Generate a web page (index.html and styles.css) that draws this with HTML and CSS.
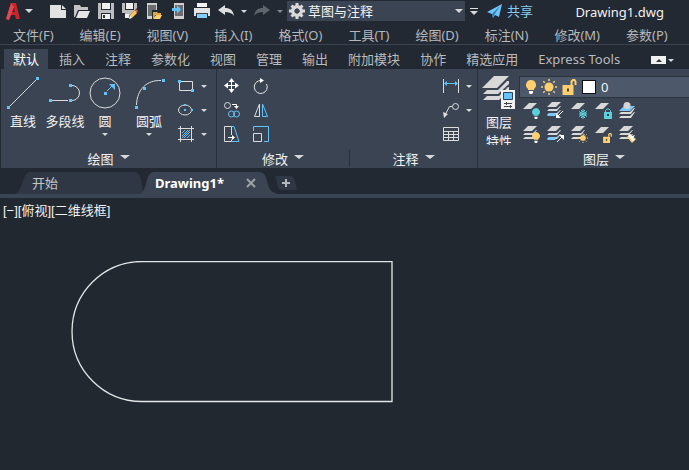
FILE: index.html
```html
<!DOCTYPE html>
<html lang="zh-CN">
<head>
  <meta charset="UTF-8" />
  <title>Drawing1.dwg</title>
  <link rel="stylesheet" href="styles.css">
</head>
<body>
  <!-- shared icon parts -->
  <svg class="defs" aria-hidden="true">
    <symbol id="sheet" viewBox="0 0 18 18"><path d="M0 7L6 1h8L8 7z" fill="#d8d8d8"/></symbol>
    <symbol id="stack" viewBox="0 0 18 18">
      <path d="M0 5L5 0h9L9 5z" fill="#d8d8d8"/>
      <path d="M0 9L2 7h8L13 4h1L10 9zM0 13l2-2h8l3-3h1l-4 5z" fill="#d8d8d8"/>
    </symbol>
    <symbol id="bulb" viewBox="0 0 10 14"><path d="M5 0a5 5 0 0 1 3 9v1H2V9a5 5 0 0 1 3-9z" fill="currentColor"/><path d="M3 11h4v2l-1 1H4l-1-1z" fill="#fff"/></symbol>
    <symbol id="sun" viewBox="0 0 16 16"><circle cx="8" cy="8" r="4.5" fill="#ffcf70"/><path d="M8 0v2M8 14v2M0 8h2M14 8h2M2.300 2.300l1.400 1.400M12.300 12.300l1.400 1.400M2.300 13.700l1.400-1.400M12.300 3.700l1.400-1.400" stroke="#ffcf70" stroke-width="1.500"/></symbol>
    <symbol id="unlock" viewBox="0 0 14 16"><path d="M0 6h11v10H0z" fill="#ffcf70"/><path d="M9 6V2.500L10.500 1h1.500L13 2.500V6" fill="none" stroke="#ffcf70" stroke-width="2"/><path d="M4.500 9.500h2v3h-2z" fill="#4a4438"/></symbol>
  </svg>

  <header class="titlebar">
    <button class="app" aria-label="应用程序"><svg width="14" height="17" viewBox="0 0 14 17"><path d="M5 0h5l4 16h-4l-1-4H5l-2 5-3-1zM8 4L6 9h2.500z" fill="#c9232d"/><path d="M5 0L0 16l3 1 5-13z" fill="#e04a4f"/></svg><i class="caret big"></i></button>
    <nav class="quick" aria-label="快速访问">
      <button aria-label="新建"><svg width="16" height="16" viewBox="0 0 16 16"><path d="M0 2h11v5h5v8H0z" fill="#e2e2e2"/><path d="M12 2l4 4h-4z" fill="#e2e2e2"/></svg></button>
      <button aria-label="打开"><svg width="16" height="16" viewBox="0 0 16 16"><path d="M0 2h6l1 2h7v3H4l-3 7H0z" fill="#c4c4c4"/><path d="M5 8h11l-3 7H2z" fill="#e6e6e6"/></svg></button>
      <button aria-label="保存"><svg width="16" height="16" viewBox="0 0 16 16"><path d="M0 0h3v7h10V0h3v16h-3v-6H3v6H0z" fill="#bdbdbd"/><path d="M4 0h8v6H4zM4 11h8v5H4z" fill="#f0f0f0"/><path d="M5 12h2v3H5z" fill="#333"/></svg></button>
      <button aria-label="另存为"><svg width="16" height="16" viewBox="0 0 16 16"><path d="M0 0h3v7h9V0h3v5L7 13v1H3v-4H0z" fill="#bdbdbd"/><path d="M4 0h7v6H4zM3 11h4v4H3z" fill="#f0f0f0"/><path d="M8 12l5-5 2 3-5 5z" fill="#ffc65c"/><path d="M13 7l1-1 2 2-1 2z" fill="#e6603c"/><path d="M8 12l2 3-3 1z" fill="#fff"/></svg></button>
      <button aria-label="从设备打开"><svg width="16" height="16" viewBox="0 0 16 16"><path d="M1 0h10v7H6v9H1z" fill="#d0d0d0"/><path d="M2 2h8v5H6v6H2z" fill="#6b6d70"/><path d="M7 9h4l1 1h3v2H9l-1 3H7z" fill="#e3a63c"/><path d="M10 12h6l-2 4H7z" fill="#ffd073"/></svg></button>
      <button aria-label="保存到设备"><svg width="16" height="16" viewBox="0 0 16 16"><path d="M4 0h10v16H4z" fill="#d0d0d0"/><path d="M5 2h8v11H5z" fill="#6b6d70"/><path d="M2 5h5V2l4 4.500L7 11V8H2z" fill="#62c3f8"/></svg></button>
      <button aria-label="打印"><svg width="16" height="16" viewBox="0 0 16 16"><path d="M3 0h10v4H3z" fill="#f4f4f4"/><path d="M0 5h16v8h-2v-3H2v3H0z" fill="#e4e4e4"/><path d="M3 11h10v4H3z" fill="#84ccfa"/><path d="M2 10h12v1H2z" fill="#444"/></svg></button>
      <button aria-label="放弃"><svg width="16" height="16" viewBox="0 0 16 16"><path d="M0 7l7-5v3c5 0 8 2 9 8-2-3-5-4-9-4v3z" fill="#dedede"/></svg></button>
      <button class="slim" aria-label="放弃列表"><i class="caret"></i></button>
      <button aria-label="重做"><svg width="16" height="16" viewBox="0 0 16 16"><path d="M16 7L9 2v3C4 5 1 7 0 13c2-3 5-4 9-4v3z" fill="#5f656c"/></svg></button>
      <button class="slim" aria-label="重做列表"><i class="caret dim"></i></button>
    </nav>
    <label class="workspace">
      <svg width="16" height="16" viewBox="0 0 16 16"><path d="M6.500 0h3v3h-3zM6.500 13h3v3h-3zM0 6.500h3v3H0zM13 6.500h3v3h-3z" fill="#dadada"/><path d="M2.500 2.500l11 11M13.500 2.500l-11 11" stroke="#dadada" stroke-width="3"/><circle cx="8" cy="8" r="4.500" fill="none" stroke="#dadada" stroke-width="3"/><circle cx="8" cy="8" r="2.500" fill="#3b4453"/></svg>
      <select aria-label="工作空间"><option>草图与注释</option></select>
      <i class="caret big"></i>
    </label>
    <button class="more" aria-label="自定义"><i class="bar"></i><i class="caret big"></i></button>
    <a class="share" href="#"><svg width="15" height="14" viewBox="0 0 15 14"><path d="M0 8L15 0l-3 13-4-2-2 3-1-4z" fill="#6cc4fa"/><path d="M5 10l8-8-6 9-1 3z" fill="#2b78ac"/></svg>共享</a>
    <span class="filename">Drawing1.dwg</span>
  </header>

  <nav class="menubar">
    <button>文件(F)</button><button>编辑(E)</button><button>视图(V)</button><button>插入(I)</button><button>格式(O)</button><button>工具(T)</button><button>绘图(D)</button><button>标注(N)</button><button>修改(M)</button><button>参数(P)</button>
  </nav>

  <nav class="ribbon-tabs">
    <button class="active">默认</button><button>插入</button><button>注释</button><button>参数化</button><button>视图</button><button>管理</button><button>输出</button><button>附加模块</button><button>协作</button><button>精选应用</button><button>Express Tools</button>
    <button class="minimize" aria-label="最小化"><i class="caret up"></i></button>
    <button class="min-menu" aria-label="最小化选项"><i class="caret"></i></button>
  </nav>

  <main class="ribbon">
    <section class="panel draw">
      <div class="tools">
        <button class="large"><svg width="32" height="32" viewBox="0 0 32 32"><path d="M3 29L29 3" stroke="#dcdcdc"/><path d="M0 29h3v3H0zM29 0h3v3h-3z" fill="#62c3f8"/></svg>直线</button>
        <button class="large"><svg width="32" height="32" viewBox="0 0 32 32"><path d="M3 23.500h16M23 8.500a7.500 7.500 0 0 1 0 15" fill="none" stroke="#dcdcdc"/><path d="M0 22h3v3H0zM20 22h3v3h-3zM20 7h3v3h-3z" fill="#62c3f8"/></svg>多段线</button>
        <button class="large"><svg width="32" height="32" viewBox="0 0 32 32"><circle cx="16" cy="16" r="15" fill="none" stroke="#dcdcdc"/><path d="M18 14l6-6" stroke="#62c3f8"/><path d="M20 7h6v6zM15 15h3v3h-3z" fill="#62c3f8"/></svg>圆<i class="caret"></i></button>
        <button class="large"><svg width="32" height="32" viewBox="0 0 32 32"><path d="M3.500 28C4 12 14 3 28 3.500" fill="none" stroke="#dcdcdc"/><path d="M2 29h3v3H2zM10 10h3v3h-3zM29 2h3v3h-3z" fill="#62c3f8"/></svg>圆弧<i class="caret"></i></button>
        <div class="small-tools">
          <button aria-label="矩形"><svg width="16" height="16" viewBox="0 0 16 16"><path d="M1.500 3.500h13v9h-13z" fill="none" stroke="#dcdcdc"/><path d="M0 2h3v3H0zM13 11h3v3h-3z" fill="#62c3f8"/></svg><i class="caret"></i></button>
          <button aria-label="椭圆"><svg width="16" height="16" viewBox="0 0 16 16"><ellipse cx="7" cy="8" rx="6.500" ry="5" fill="none" stroke="#dcdcdc"/><path d="M6 2h2v2H6zM6 7h2v2H6zM13 7h2v2h-2z" fill="#62c3f8"/></svg><i class="caret"></i></button>
          <button aria-label="图案填充"><svg width="16" height="16" viewBox="0 0 16 16"><path d="M0 2.500h16M0 13.500h16M2.500 0v16M13.500 0v16" stroke="#dcdcdc"/><path d="M4 7l3-3M4 10l6-6M4 12l8-8M6 12l6-6M9 12l3-3" stroke="#62c3f8"/></svg><i class="caret"></i></button>
        </div>
      </div>
      <button class="panel-title">绘图<i class="caret title"></i></button>
    </section>

    <section class="panel modify">
      <div class="tools">
        <div class="pair-tools">
          <button aria-label="移动"><svg width="16" height="16" viewBox="0 0 16 16"><path d="M7.500 2v11M2 7.500h11" stroke="#fff"/><path d="M7.500 0l3 4h-6zM7.500 15l3-4h-6zM0 7.500l4-3v6zM15 7.500l-4-3v6z" fill="#fff"/></svg></button>
          <button aria-label="旋转"><svg width="16" height="16" viewBox="0 0 16 16"><path d="M8 2.500A6.500 6.500 0 1 0 13.500 6" fill="none" stroke="#e6e6e6"/><path d="M7 0l4 2.500L7 5z" fill="#fff"/></svg></button>
          <button aria-label="复制"><svg width="16" height="16" viewBox="0 0 16 16"><g fill="none"><circle cx="3.500" cy="3.500" r="3" stroke="#dcdcdc"/><circle cx="7.500" cy="12" r="3" stroke="#62c3f8"/><circle cx="12.500" cy="12" r="3" stroke="#62c3f8"/><path d="M8 2.500h4.500V5" stroke="#fff"/></g><path d="M10 4h5l-2.500 3z" fill="#fff"/></svg></button>
          <button aria-label="镜像"><svg width="16" height="16" viewBox="0 0 16 16"><path d="M6.500 2v12.500h-5z" fill="none" stroke="#dcdcdc"/><path d="M9.500 2v12.500h5z" fill="none" stroke="#62c3f8"/></svg></button>
          <button aria-label="拉伸"><svg width="16" height="16" viewBox="0 0 16 16"><path d="M7.500 9V.5h-7v15h7v-2" fill="none" stroke="#dcdcdc"/><path d="M8 .5h2l5 15H8" fill="none" stroke="#62c3f8"/><path d="M4 11.500h5" stroke="#fff"/><path d="M8 9l3 2.500L8 14z" fill="#fff"/></svg></button>
          <button aria-label="缩放"><svg width="16" height="16" viewBox="0 0 16 16"><path d="M.5 5V.5h15v15H11" fill="none" stroke="#62c3f8"/><path d="M.5 7.500h8v8h-8z" fill="none" stroke="#dcdcdc"/></svg></button>
        </div>
      </div>
      <button class="panel-title">修改<i class="caret title"></i></button>
    </section>

    <section class="panel annotate">
      <div class="tools">
        <div class="small-tools">
          <button aria-label="标注"><svg width="16" height="16" viewBox="0 0 16 16"><path d="M.5 1v14M15.500 1v14" stroke="#dcdcdc"/><path d="M2 5.500h12" stroke="#62c3f8"/><path d="M1 5.500L4 3v5zM15 5.500L12 3v5z" fill="#62c3f8"/></svg><i class="caret"></i></button>
          <button aria-label="引线"><svg width="16" height="16" viewBox="0 0 16 16"><circle cx="12.500" cy="4.500" r="3" fill="none" stroke="#dcdcdc"/><path d="M9 4.500H6.500L2 13" fill="none" stroke="#dcdcdc"/><path d="M0 10l5 2-4 4z" fill="#dcdcdc"/></svg><i class="caret"></i></button>
          <button aria-label="表格"><svg width="16" height="16" viewBox="0 0 16 16"><path d="M.5 1.500h15v13H.5zM0 5.500h16M0 8.500h16M0 11.500h16M5.500 5v9M10.500 5v9" fill="none" stroke="#dcdcdc"/></svg></button>
        </div>
      </div>
      <button class="panel-title">注释<i class="caret title"></i></button>
    </section>

    <section class="panel layers">
      <div class="tools">
        <button class="large props"><svg width="34" height="34" viewBox="0 0 34 34"><path d="M0 12L12 0h15L15 12zM1 18l4-4h11l9-9h2v3L16 18zM1 24l4-4h12l9-9h1v3L17 24z" fill="#d8d8d8"/><path d="M19 14h14v19H19z" fill="#f0f0f0"/><path d="M21.500 16.500h9v7h-9z" fill="#62c3f8" stroke="#25425c"/><path d="M22 27.500h8M22 30.500h8M24.500 26v3M28.500 29v3" stroke="#444"/></svg><span>图层</span><span>特性</span></button>
        <div class="layer-box">
          <div class="layer-combo">
            <button class="yellow" aria-label="开关图层"><svg width="10" height="14"><use href="#bulb"/></svg></button>
            <button aria-label="冻结图层"><svg width="16" height="16"><use href="#sun"/></svg></button>
            <button aria-label="锁定图层"><svg width="15" height="16"><use href="#unlock"/></svg></button>
            <i class="swatch"></i>
            <select aria-label="图层"><option>0</option></select>
          </div>
          <div class="layer-tools">
            <button class="teal" aria-label="关闭"><svg width="18" height="18" viewBox="0 0 18 18"><use href="#sheet"/><use href="#bulb" x="9" y="6" width="8" height="11"/></svg></button>
            <button aria-label="隔离"><svg width="18" height="18" viewBox="0 0 18 18"><use href="#stack"/><path d="M0 14l2-3h8l-2 3z" fill="#7cc8fa"/><path d="M16 9l-5 5" stroke="#fff"/><path d="M9 11v5h5z" fill="#fff"/></svg></button>
            <button aria-label="冻结"><svg width="18" height="18" viewBox="0 0 18 18"><use href="#sheet"/><circle cx="12" cy="12" r="2.500" fill="none" stroke="#5bd0dc"/><path d="M12 7v10M8 9.500l8 5M8 14.500l8-5M10 8l2 2 2-2M10 16l2-2 2 2M8 12h8" stroke="#5bd0dc" fill="none"/></svg></button>
            <button aria-label="锁定"><svg width="18" height="18" viewBox="0 0 18 18"><use href="#sheet"/><path d="M9 10h8v7H9z" fill="#5bd0dc"/><path d="M10.500 10V8.500L12 7h2l1.500 1.500V10" fill="none" stroke="#5bd0dc"/><path d="M12 12h2v2h-2z" fill="#254552"/></svg></button>
            <button aria-label="置为当前"><svg width="18" height="18" viewBox="0 0 18 18"><path d="M0 12l2-2h9l4-4h1l-4 6zM0 16l2-2h9l4-4h1l-4 6z" fill="#dcdcdc"/><path d="M0 9l5-5h11l-5 5z" fill="#7cc8fa"/><circle cx="8" cy="3.500" r="3.500" fill="#d4d4d4"/></svg></button>
            <button class="yellow" aria-label="打开所有图层"><svg width="18" height="18" viewBox="0 0 18 18"><use href="#stack"/><use href="#bulb" x="9" y="6" width="8" height="11"/></svg></button>
            <button aria-label="取消隔离"><svg width="18" height="18" viewBox="0 0 18 18"><use href="#stack"/><path d="M0 14l2-3h8l-2 3z" fill="#7cc8fa"/><path d="M10 16l5-5" stroke="#fff"/><path d="M12 9h5v5z" fill="#fff"/></svg></button>
            <button aria-label="解冻"><svg width="18" height="18" viewBox="0 0 18 18"><use href="#stack"/><use href="#sun" x="7" y="7" width="10" height="10"/></svg></button>
            <button aria-label="解锁"><svg width="18" height="18" viewBox="0 0 18 18"><use href="#sheet"/><use href="#unlock" x="8" y="7" width="9" height="10"/></svg></button>
            <button aria-label="匹配图层"><svg width="18" height="18" viewBox="0 0 18 18"><use href="#stack"/><path d="M8 11l3-3 6 5-4 4z" fill="#ffcf70"/><path d="M11 8l2 2 3-1-2 3 2 2-2 1-5-5z" fill="#fff"/></svg></button>
          </div>
        </div>
      </div>
      <button class="panel-title">图层<i class="caret title"></i></button>
    </section>
  </main>

  <nav class="file-tabs">
    <div class="file-tab start">
      <svg class="tab-shape" viewBox="0 0 132 24" preserveAspectRatio="none"><path d="M0 24C10 22 7 0 17 0H122C132 0 129 22 132 24z" fill="#303744"/></svg>
      <button>开始</button>
    </div>
    <div class="file-tab current">
      <svg class="tab-shape" viewBox="0 0 138 24" preserveAspectRatio="none"><path d="M0 24C8 20 5 0 14 0H118C132 0 122 21 138 24z" fill="#3b4453"/></svg>
      <button>Drawing1*</button>
      <button class="close" aria-label="关闭"><svg width="10" height="10" viewBox="0 0 10 10"><path d="M1 1l8 8M9 1L1 9" stroke="#9da2a9" stroke-width="2"/></svg></button>
    </div>
    <button class="add-tab" aria-label="新图形"><svg width="22" height="14" viewBox="0 0 22 14"><path d="M0 0h15c5 0 5 7 7 14H7C1 14 3 5 0 0z" fill="#303744"/><path d="M11 3v8M7 7h8" stroke="#b4b8bd" stroke-width="2"/></svg></button>
  </nav>

  <section class="canvas">
    <div class="view-controls"><button>[−]</button><button>[俯视]</button><button>[二维线框]</button></div>
    <svg class="drawing" width="322" height="142" viewBox="0 0 322 142"><path d="M71 .5H321V140.500H71A70 70 0 0 1 71 .5z" fill="none" stroke="#e4e5e6" stroke-width="1.300"/></svg>
  </section>
</body>
</html>
```

FILE: styles.css
```css
* {
  box-sizing: border-box;
}
body {
  margin: 0;
  min-height: 100vh;
  display: flex;
  flex-direction: column;
  background: #222933;
  color: #f2f2f2;
  font-family: "Noto Sans", "Noto Sans CJK SC", sans-serif;
  font-size: 13px;
  line-height: 16px;
  overflow-x: hidden;
}
button, select {
  margin: 0;
  padding: 0;
  border: none;
  background: none;
  color: inherit;
  font: inherit;
  white-space: nowrap;
}
select {
  appearance: none;
  outline: none;
}
svg {
  display: block;
  flex: none;
}
.defs {
  position: absolute;
  width: 0;
  height: 0;
}
.yellow {
  color: #ffcf70;
}
.teal {
  color: #5bd0dc;
}

/* triangles */
.caret {
  flex: none;
  width: 0;
  border: 3px solid transparent;
  border-top-color: #d6d8da;
  border-bottom: none;
}
.caret.big {
  border-width: 4px 4px 0;
}
.caret.title {
  border-width: 4px 5px 0;
  margin-bottom: 3px;
}
.caret.dim {
  border-top-color: #858a90;
}
.caret.up {
  border-top: none;
  border-bottom: 3px solid #333;
}

/* title bar */
.titlebar {
  height: 22px;
  display: flex;
  align-items: center;
  padding: 0 25px 0 6px;
}
.app {
  display: flex;
  align-items: center;
  gap: 5px;
  margin-right: 17px;
}
.quick {
  display: flex;
  align-items: center;
  gap: 8px;
  margin-right: 5px;
}
.quick .slim {
  width: 4px;
  display: flex;
  justify-content: center;
}
.workspace {
  width: 178px;
  height: 20px;
  display: flex;
  align-items: center;
  gap: 3px;
  padding: 0 2px;
  background: #3b4453;
}
.workspace select {
  flex: 1;
}
.more {
  display: flex;
  flex-direction: column;
  align-items: center;
  gap: 2px;
  margin: 0 9px 0 5px;
}
.more .bar {
  width: 8px;
  height: 1px;
  background: #e0e0e0;
}
.share {
  display: flex;
  align-items: center;
  gap: 5px;
  color: #84ccf6;
  text-decoration: none;
}
.filename {
  margin-left: auto;
  padding-top: 2px;
}

/* menus and ribbon tabs */
.menubar {
  height: 23px;
  display: flex;
  align-items: center;
  gap: 26px;
  padding: 3px 0 0 13px;
  border-bottom: 1px solid #3b4350;
  color: #b5b8bc;
}
.ribbon-tabs {
  height: 24px;
  display: flex;
  gap: 2px;
  padding: 4px 0 0 4px;
  color: #b8bbbf;
}
.ribbon-tabs button {
  padding: 0 9px;
}
.ribbon-tabs .active {
  background: #3b4453;
  color: #fff;
}
.ribbon-tabs .minimize {
  width: 15px;
  height: 8px;
  margin: 7px 0 0 20px;
  padding: 0;
  display: flex;
  align-items: center;
  justify-content: center;
  background: #f0f0f0;
}
.ribbon-tabs .min-menu {
  padding: 2px 0 0;
  display: flex;
  align-items: center;
}

/* ribbon */
.ribbon {
  display: flex;
  height: 99px;
  margin-left: 1px;
  background: #3b4453;
  overflow: hidden;
}
.panel {
  flex: none;
  display: flex;
  flex-direction: column;
  padding: 5px 0 1px;
}
.draw {
  width: 216px;
  border-right: 1px solid #272f3a;
}
.modify {
  width: 132px;
}
.annotate {
  width: 129px;
  border-right: 1px solid #272f3a;
}
.annotate .panel-title {
  border-left: 1px solid #272f3a;
}
/* wide enough to run under the window edge */
.layers {
  flex: 1 0 252px;
}
.tools {
  flex: 1;
  display: flex;
  min-height: 0;
}
.draw .tools {
  display: grid;
  grid-template-columns: 44px 40px 40px 48px auto;
}
.annotate .tools {
  justify-content: flex-end;
}
.large {
  display: flex;
  flex-direction: column;
  align-items: center;
  padding-top: 3px;
}
.large svg {
  margin-bottom: 4px;
}
.large .caret {
  margin-top: 4px;
}
.small-tools {
  display: flex;
  flex-direction: column;
  gap: 8px;
  padding: 4px 5px;
}
.small-tools button {
  display: flex;
  align-items: center;
  gap: 7px;
}
.pair-tools {
  display: grid;
  grid-template-columns: 16px 16px;
  grid-auto-rows: 16px;
  gap: 8px 13px;
  padding: 4px 7px;
}
.panel-title {
  height: 17px;
  display: flex;
  align-items: center;
  justify-content: center;
  gap: 6px;
}
.props {
  width: 34px;
  height: 71px;
  margin-left: 4px;
  padding-top: 2px;
  overflow: hidden;
}
.props span + span {
  margin-top: 3px;
}
.layer-box {
  flex: 1;
  padding: 2px 0 0 3px;
}
.layer-combo {
  height: 22px;
  display: flex;
  align-items: center;
  gap: 5px;
  padding-left: 6px;
  background: #4d586b;
  border: 1px solid #2a323e;
  border-right: none;
}
.layer-combo select {
  flex: 1;
}
.swatch {
  width: 14px;
  height: 14px;
  background: #fff;
  border: 1px solid #111;
}
.layer-tools {
  display: grid;
  grid-template-columns: repeat(5, 18px);
  gap: 6px;
  padding: 4px 0 0 4px;
}

/* drawing file tabs */
.file-tabs {
  height: 30px;
  display: flex;
  align-items: flex-end;
  padding-left: 14px;
  border-bottom: 4px solid #3b4453;
}
.file-tab {
  position: relative;
  height: 22px;
  display: flex;
  align-items: center;
  color: #c4c7ca;
}
.tab-shape {
  position: absolute;
  inset: 0;
  width: 100%;
  height: 100%;
}
.file-tab button {
  position: relative;
}
.start {
  width: 130px;
  padding-left: 18px;
}
.current {
  width: 138px;
  margin-left: -4px;
  padding-left: 15px;
  padding-right: 22px;
  justify-content: space-between;
  color: #fff;
  font-weight: bold;
}
.add-tab {
  position: relative;
  margin: 0 0 4px -3px;
}

/* model space */
.canvas {
  flex: 1;
  background: #212830;
  padding: 5px 0 0 3px;
}
.view-controls {
  display: flex;
  font-family: "Liberation Sans", "Noto Sans CJK SC", sans-serif;
}
.drawing {
  margin: 42px 0 0 68px;
}
```
